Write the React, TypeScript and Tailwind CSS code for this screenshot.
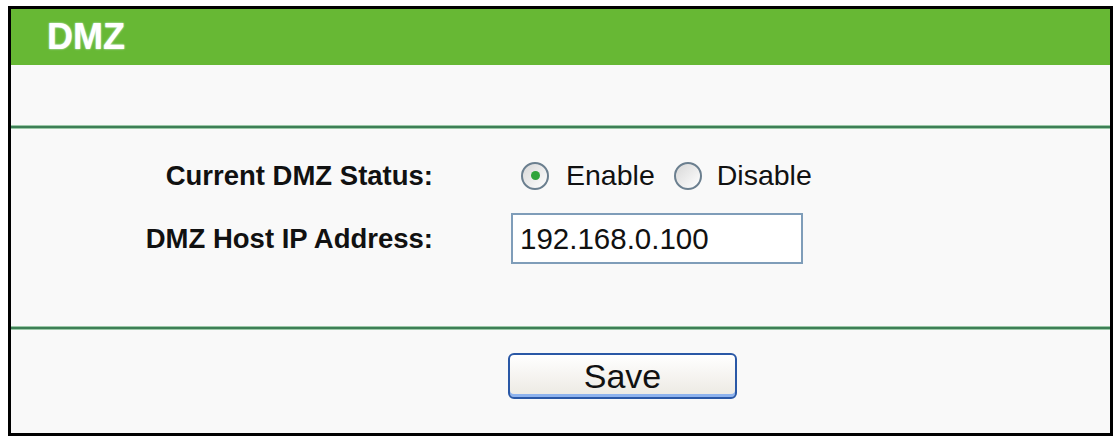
import { useState } from 'react';

function Radio({ checked, onClick }: { checked: boolean; onClick: () => void }) {
  return (
    <span
      onClick={onClick}
      className="w-[28px] h-[28px] rounded-full border-[2px] border-[#6b7f8f] bg-gradient-to-br from-[#d8d8d8] to-[#ffffff] flex items-center justify-center cursor-pointer"
    >
      {checked && <span className="w-[9px] h-[9px] rounded-full bg-[#2fa43a]" />}
    </span>
  );
}

export default function App() {
  const [enabled, setEnabled] = useState(true);
  const [ip, setIp] = useState('192.168.0.100');

  return (
    <div className="w-[1115px] h-[442px] bg-white pt-[6px] pl-[8px] font-['Liberation_Sans',Arial,sans-serif]">
      <div className="w-[1105px] h-[430px] border-[3px] border-black bg-[#f9f9f9] flex flex-col">
        <div className="h-[56px] bg-[#67b834] flex items-center pl-[36px]">
          <h1 className="text-[36px] font-bold text-white leading-none [text-shadow:0_0_2px_#dff7ff]">DMZ</h1>
        </div>
        <div className="h-[60px]" />
        <div className="h-[4px] bg-[#3d7f56] border-y border-[#9cc9a8]" />

        <div className="grid grid-cols-[422px_1fr] gap-x-[78px] gap-y-[12px] pt-[21px] text-[#111]">
          <div className="text-right text-[27.5px] font-bold h-[51px] flex items-center justify-end">
            Current DMZ Status:
          </div>
          <div className="flex items-center text-[28.5px] h-[51px] pl-[10px]">
            <Radio checked={enabled} onClick={() => setEnabled(true)} />
            <span className="ml-[17px]">Enable</span>
            <span className="ml-[19px]">
              <Radio checked={!enabled} onClick={() => setEnabled(false)} />
            </span>
            <span className="ml-[15px]">Disable</span>
          </div>

          <div className="text-right text-[27.5px] font-bold h-[51px] flex items-center justify-end">
            DMZ Host IP Address:
          </div>
          <div className="flex items-center">
            <input
              value={ip}
              onChange={(e) => setIp(e.target.value)}
              className="w-[292px] h-[51px] border-[2px] border-[#7f9db9] bg-white px-[7px] text-[29.5px] text-[#111] outline-none"
            />
          </div>
        </div>

        <div className="h-[4px] bg-[#3d7f56] border-y border-[#9cc9a8] mt-[62px]" />

        <div className="flex justify-center pl-[124px] pt-[23px]">
          <button className="w-[229px] h-[46px] rounded-[6px] border-[2px] border-[#2a58a6] bg-gradient-to-b from-[#ffffff] to-[#ece9e2] shadow-[inset_0_-3px_0_#8eb3ee] text-[34px] text-[#111] leading-none">
            Save
          </button>
        </div>
      </div>
    </div>
  );
}
